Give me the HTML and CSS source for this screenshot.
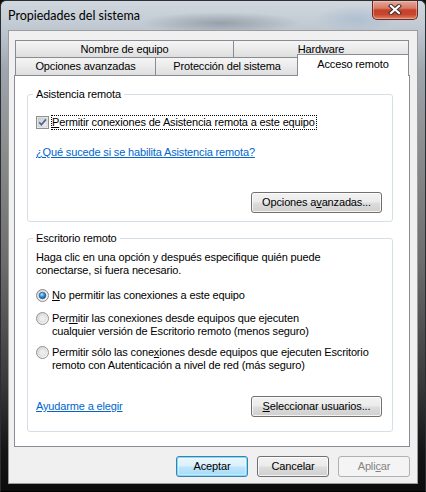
FILE: index.html
```html
<!DOCTYPE html>
<html lang="es">
<head>
<meta charset="utf-8">
<title>Propiedades del sistema</title>
<link rel="stylesheet" href="styles.css">
</head>
<body>
<div class="window">
  <div class="titlebar">
    <span class="title">Propiedades del sistema</span>
    <button class="close" aria-label="Cerrar">
      <svg width="14" height="11" viewBox="0 0 14 11">
        <path d="M3 2 L11 9 M11 2 L3 9" fill="none" stroke="#3a3232" stroke-width="4.2" stroke-linecap="square"/>
        <path d="M3 2 L11 9 M11 2 L3 9" fill="none" stroke="#ffffff" stroke-width="2.2" stroke-linecap="square"/>
      </svg>
    </button>
  </div>
  <div class="client">
    <div class="tabs">
      <div class="tabrow back">
        <div class="tab t-nombre">Nombre de equipo</div>
        <div class="tab t-hardware">Hardware</div>
      </div>
      <div class="tabrow front">
        <div class="tab t-opciones">Opciones avanzadas</div>
        <div class="tab t-proteccion">Protección del sistema</div>
        <div class="tab selected t-acceso">Acceso remoto</div>
      </div>
    </div>
    <div class="panel">
      <div class="group g1">
        <div class="legend">Asistencia remota</div>
        <div class="check-row">
          <span class="checkbox">
            <svg width="13" height="13" viewBox="0 0 13 13">
              <defs>
                <linearGradient id="cbg" x1="0" y1="0" x2="1" y2="1">
                  <stop offset="0" stop-color="#c9ccd2"/>
                  <stop offset="1" stop-color="#f4f4f5"/>
                </linearGradient>
              </defs>
              <rect x="0.5" y="0.5" width="12" height="12" fill="#f6f6f6" stroke="#8e8f8f"/>
              <rect x="2" y="2" width="9" height="9" fill="url(#cbg)" stroke="#b8bcc2" stroke-width="0.6"/>
              <path d="M3.2 6.3 L5.4 8.8 L9.9 3.4" fill="none" stroke="#4e6490" stroke-width="1.7"/>
            </svg>
          </span>
          <span class="focus-label"><u>P</u>ermitir conexiones de Asistencia remota a este equipo</span>
        </div>
        <a class="link l1" href="#">¿Qué sucede si se habilita Asistencia remota?</a>
        <div class="btn-row">
          <button class="btn b-opciones">Opciones a<u>v</u>anzadas...</button>
        </div>
      </div>
      <div class="group g2">
        <div class="legend">Escritorio remoto</div>
        <p class="desc">Haga clic en una opción y después especifique quién puede<br>conectarse, si fuera necesario.</p>
        <div class="radio-row r1">
          <span class="radio on">
            <svg width="13" height="13" viewBox="0 0 13 13">
              <defs>
                <linearGradient id="rbg1" x1="0" y1="0" x2="1" y2="1">
                  <stop offset="0" stop-color="#cfcfcf"/>
                  <stop offset="1" stop-color="#fbfbfb"/>
                </linearGradient>
                <radialGradient id="dot" cx="0.4" cy="0.35" r="0.7">
                  <stop offset="0" stop-color="#b8ecff"/>
                  <stop offset="0.45" stop-color="#3e97d8"/>
                  <stop offset="1" stop-color="#0f4c8f"/>
                </radialGradient>
              </defs>
              <circle cx="6.5" cy="6.5" r="6" fill="url(#rbg1)" stroke="#8a8a8a"/>
              <circle cx="6.5" cy="6.5" r="3.3" fill="url(#dot)" stroke="#1d4f86" stroke-width="0.6"/>
            </svg>
          </span>
          <span class="rlabel"><u>N</u>o permitir las conexiones a este equipo</span>
        </div>
        <div class="radio-row r2">
          <span class="radio">
            <svg width="13" height="13" viewBox="0 0 13 13">
              <defs>
                <linearGradient id="rbg2" x1="0" y1="0" x2="1" y2="1">
                  <stop offset="0" stop-color="#d2d2d2"/>
                  <stop offset="1" stop-color="#fbfbfb"/>
                </linearGradient>
              </defs>
              <circle cx="6.5" cy="6.5" r="6" fill="url(#rbg2)" stroke="#939393"/>
              <circle cx="6.5" cy="6.5" r="3.6" fill="#ececec" stroke="#d6d6d6" stroke-width="0.6"/>
            </svg>
          </span>
          <span class="rlabel">Per<u>m</u>itir las conexiones desde equipos que ejecuten<br>cualquier versión de Escritorio remoto (menos seguro)</span>
        </div>
        <div class="radio-row r3">
          <span class="radio">
            <svg width="13" height="13" viewBox="0 0 13 13">
              <circle cx="6.5" cy="6.5" r="6" fill="url(#rbg2)" stroke="#939393"/>
              <circle cx="6.5" cy="6.5" r="3.6" fill="#ececec" stroke="#d6d6d6" stroke-width="0.6"/>
            </svg>
          </span>
          <span class="rlabel">Permitir sólo las cone<u>x</u>iones desde equipos que ejecuten Escritorio<br>remoto con Autenticación a nivel de red (más seguro)</span>
        </div>
        <div class="bottom-row">
          <a class="link" href="#">Ayudarme a elegir</a>
          <button class="btn b-usuarios"><u>S</u>eleccionar usuarios...</button>
        </div>
      </div>
    </div>
    <div class="dialog-buttons">
      <button class="btn dlg default">Aceptar</button>
      <button class="btn dlg">Cancelar</button>
      <button class="btn dlg disabled">Apli<u>c</u>ar</button>
    </div>
  </div>
</div>
</body>
</html>
```

FILE: styles.css
```css
* { box-sizing: border-box; }

html, body {
  margin: 0;
  padding: 0;
  background: #0d0d0d;
}

body {
  font-family: "Liberation Sans", Arial, sans-serif;
  font-size: 11px;
  letter-spacing: -0.15px;
  color: #000;
}

.window {
  width: 426px;
  height: 492px;
  padding: 0 7px 7px 7px;
  border: 1px solid #2b2f33;
  border-bottom-color: #000;
  border-radius: 6px 6px 0 0;
  display: flex;
  flex-direction: column;
  background:
    radial-gradient(ellipse 80px 11px at 220px 22px, rgba(70, 80, 92, 0.35), rgba(70, 80, 92, 0) 100%),
    radial-gradient(ellipse 40px 14px at 355px 18px, rgba(150, 175, 205, 0.45), rgba(150, 175, 205, 0) 100%),
    linear-gradient(to bottom, #d0d7de 0px, #bfc8d1 28px, #9ea5ac 70px, #8b8c8d 150px, #6d6d6d 260px, #3a3a3a 380px, #151515 450px, #0c0c0c 492px);
}

.titlebar {
  height: 29px;
  display: flex;
  align-items: flex-start;
}

.title {
  font-family: Lato, "Liberation Sans", sans-serif;
  font-size: 12.5px;
  letter-spacing: 0;
  line-height: 16px;
  margin-top: 7px;
  color: #000;
}

.close {
  margin-left: auto;
  width: 46px;
  height: 19px;
  padding: 0;
  border: 1px solid #6a2d24;
  border-top: none;
  border-radius: 0 0 5px 5px;
  display: flex;
  align-items: center;
  justify-content: center;
  background: linear-gradient(to bottom, #e8a898 0%, #d77a66 40%, #c4422a 50%, #c8462d 75%, #de8466 100%);
  box-shadow: inset 0 0 0 1px rgba(255, 210, 200, 0.45);
}

.close svg { display: block; margin-top: -1px; }

.client {
  height: 454px;
  border: 1px solid #9c9c9c;
  background: #f0f0f0;
  padding: 9px 7px 0 5px;
  display: flex;
  flex-direction: column;
}

/* Tabs */
.tabs {
  display: flex;
  flex-direction: column;
}

.tabrow {
  display: flex;
  align-items: flex-start;
  padding-left: 1px;
}

.tabrow.back { height: 17px; }
.tabrow.front { height: 18px; }

.tab {
  border: 1px solid #898c95;
  border-bottom: none;
  background: linear-gradient(to bottom, #f5f5f5 0%, #ebebeb 50%, #dedede 100%);
  text-align: center;
  white-space: nowrap;
}

.tabrow.back .tab { height: 17px; line-height: 16px; }
.tabrow.front .tab { height: 18px; line-height: 17px; }

.t-nombre { width: 219px; }
.t-hardware { width: 176px; margin-left: -1px; }
.t-opciones { width: 141px; }
.t-proteccion { width: 144px; margin-left: -1px; }

.tabrow.front .tab.selected {
  position: relative;
  z-index: 1;
  width: 112px;
  margin-left: -2px;
  margin-top: -3px;
  height: 22px;
  line-height: 16px;
  padding-top: 1px;
  background: #fff;
}

/* Panel */
.panel {
  height: 372px;
  border: 1px solid #898c95;
  background: #fff;
  padding: 18px 0 0 12px;
}

.group {
  width: 366px;
  border: 1px solid #d5dfe5;
  border-radius: 3px;
  padding: 0 10px 0 8px;
  line-height: 13px;
}

.g1 { padding-bottom: 8px; }
.g2 { margin-top: 16px; padding-bottom: 14px; }

.legend {
  margin-top: -7px;
  margin-left: -3px;
  padding: 0 3px;
  width: fit-content;
  background: #fff;
  line-height: 13px;
}

.check-row {
  margin-top: 14px;
  height: 15px;
  display: flex;
  align-items: center;
}

.checkbox, .radio {
  width: 13px;
  height: 13px;
  flex: none;
}

.checkbox svg, .radio svg { display: block; }

.focus-label {
  margin-left: 2px;
  border: 1px dotted #000;
  line-height: 13px;
  padding-right: 1px;
}

.link {
  display: block;
  width: fit-content;
  color: #0066cc;
  text-decoration: underline;
  line-height: 13px;
}

.l1 { margin-top: 16px; }

.btn-row {
  margin-top: 33px;
  display: flex;
  justify-content: flex-end;
}

.btn {
  font: inherit;
  letter-spacing: inherit;
  color: #000;
  height: 21px;
  padding: 0;
  line-height: 19px;
  border: 1px solid #707070;
  border-radius: 3px;
  background: linear-gradient(to bottom, #f2f2f2 0%, #ebebeb 48%, #dddddd 52%, #cfcfcf 100%);
  box-shadow: inset 0 0 0 1px rgba(255, 255, 255, 0.75);
  text-align: center;
  white-space: nowrap;
}

.b-opciones, .b-usuarios { width: 131px; }

.desc {
  margin: 6px 0 0 0;
  line-height: 13px;
}

.radio-row {
  display: flex;
  align-items: flex-start;
  line-height: 13px;
}

.rlabel { margin-left: 3px; }

.r1 { margin-top: 12px; }
.r2 { margin-top: 10px; }
.r3 { margin-top: 8px; }

.bottom-row {
  margin-top: 24px;
  display: flex;
  align-items: center;
  justify-content: space-between;
}

.dialog-buttons {
  margin-top: 9px;
  display: flex;
  justify-content: flex-end;
  gap: 9px;
}

.btn.dlg { width: 72px; }

.btn.default {
  border-color: #3c7fb1;
  background: linear-gradient(to bottom, #eaf6fd 0%, #d9f0fc 48%, #bee6fd 52%, #a7d9f5 100%);
  box-shadow: inset 0 0 0 1px #7fdcf8, inset 0 0 0 2px rgba(255, 255, 255, 0.35);
}

.btn.disabled {
  color: #838383;
  border-color: #adb2b5;
  background: #f4f4f4;
  box-shadow: none;
}

u { text-decoration: underline; }
```
